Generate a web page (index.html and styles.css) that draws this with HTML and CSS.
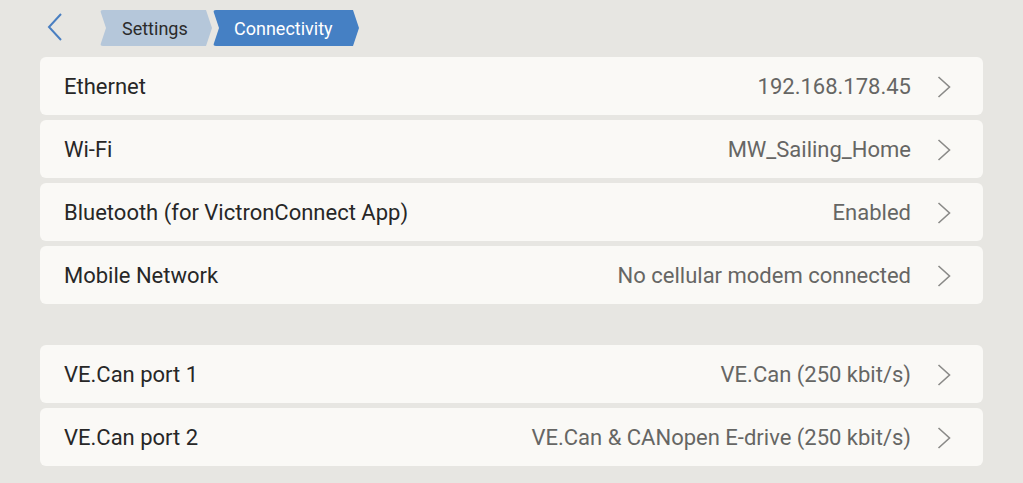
FILE: index.html
```html
<!DOCTYPE html>
<html>
<head>
<meta charset="utf-8">
<link rel="stylesheet" href="styles.css">
</head>
<body>
<div class="page">
  <header class="topbar">
    <button class="back" aria-label="Back">
      <svg width="16" height="28" viewBox="0 0 16 28"><path d="M14 1 L2 14 L14 27" fill="none" stroke="#4a7fc1" stroke-width="2"/></svg>
    </button>
    <nav class="crumbs">
      <span class="crumb crumb-parent">Settings</span>
      <span class="crumb crumb-current">Connectivity</span>
    </nav>
  </header>
  <main class="list">
    <div class="group">
      <div class="row"><span class="label">Ethernet</span><span class="value">192.168.178.45</span><svg class="chev" viewBox="0 0 14 22"><path d="M1.5 1 L12.5 11 L1.5 21"/></svg></div>
      <div class="row"><span class="label">Wi-Fi</span><span class="value">MW_Sailing_Home</span><svg class="chev" viewBox="0 0 14 22"><path d="M1.5 1 L12.5 11 L1.5 21"/></svg></div>
      <div class="row"><span class="label">Bluetooth (for VictronConnect App)</span><span class="value">Enabled</span><svg class="chev" viewBox="0 0 14 22"><path d="M1.5 1 L12.5 11 L1.5 21"/></svg></div>
      <div class="row"><span class="label">Mobile Network</span><span class="value">No cellular modem connected</span><svg class="chev" viewBox="0 0 14 22"><path d="M1.5 1 L12.5 11 L1.5 21"/></svg></div>
    </div>
    <div class="group">
      <div class="row"><span class="label">VE.Can port 1</span><span class="value">VE.Can (250 kbit/s)</span><svg class="chev" viewBox="0 0 14 22"><path d="M1.5 1 L12.5 11 L1.5 21"/></svg></div>
      <div class="row"><span class="label">VE.Can port 2</span><span class="value">VE.Can &amp; CANopen E-drive (250 kbit/s)</span><svg class="chev" viewBox="0 0 14 22"><path d="M1.5 1 L12.5 11 L1.5 21"/></svg></div>
    </div>
  </main>
</div>
</body>
</html>
```
FILE: styles.css
```css
* { box-sizing: border-box; }
html, body { margin: 0; padding: 0; }
body {
  background: #e7e6e2;
  font-family: Roboto, "Liberation Sans", sans-serif;
  width: 1023px;
  height: 483px;
  overflow: hidden;
}
.page { padding: 0 40px 0 40px; }
.topbar {
  height: 57px;
  display: flex;
  align-items: flex-start;
  padding-top: 10px;
}
.back {
  background: none;
  border: none;
  padding: 0;
  margin: 3px 0 0 7px;
  width: 16px;
  height: 28px;
  display: flex;
}
.crumbs {
  display: flex;
  margin-left: 37px;
}
.crumb {
  height: 36px;
  display: flex;
  align-items: center;
  font-size: 18px;
  clip-path: polygon(0 0, calc(100% - 6px) 0, 100% 50%, calc(100% - 6px) 100%, 0 100%, 6px 50%);
}
.crumb-parent {
  width: 112px;
  background: #b5c7da;
  color: #2b2b2b;
  padding-left: 22px;
  border-radius: 3px;
}
.crumb-current {
  width: 146px;
  margin-left: 1px;
  background: #4580c4;
  color: #ffffff;
  padding-left: 21px;
  border-radius: 3px;
}
.list { display: flex; flex-direction: column; gap: 41px; }
.group { display: flex; flex-direction: column; gap: 5px; }
.row {
  height: 58px;
  background: #faf9f6;
  border-radius: 6px;
  display: flex;
  align-items: center;
  padding: 1px 32px 0 24px;
  font-size: 22px;
}
.label { color: #272727; flex: 1; }
.value { color: #666664; }
.chev {
  width: 14px;
  height: 22px;
  margin-left: 26px;
  fill: none;
  stroke: #8a8a88;
  stroke-width: 1.6;
}
```
